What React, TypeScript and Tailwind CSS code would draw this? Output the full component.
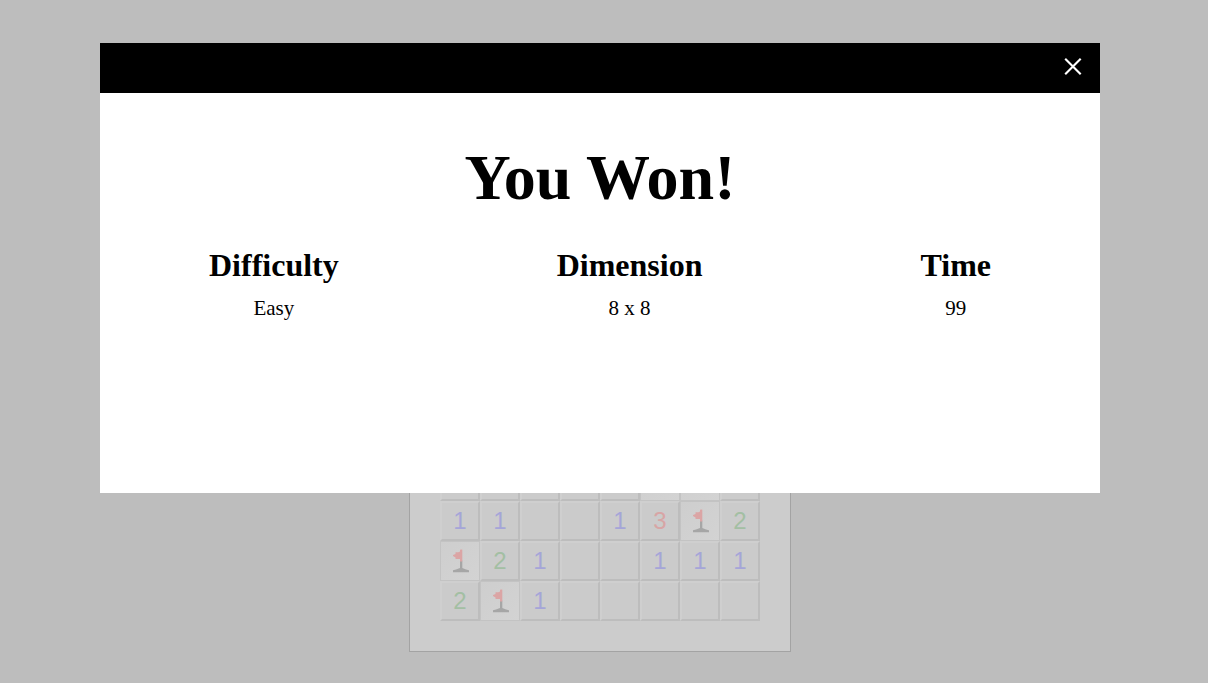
import { useState } from "react";

// ".": opened and empty, "#": covered, "F": flagged, digits: neighbouring mines
const rows = [
  "........",
  "........",
  "........",
  "........",
  ".....##.",
  "11..13F2",
  "F21..111",
  "2F1.....",
];

const digitColors: Record<string, string> = {
  "1": "text-[#a5a5d8]",
  "2": "text-[#a3bfa3]",
  "3": "text-[#d8a5a5]",
};

const stats = [
  { label: "Difficulty", value: "Easy" },
  { label: "Dimension", value: "8 x 8" },
  { label: "Time", value: "99" },
];

function Flag() {
  return (
    <svg viewBox="0 0 40 40" className="size-10 shrink-0" aria-hidden="true">
      <path d="M20 19.500H22.300V27L26 28.600L29 29.300V31.300H13V29.300L16 28.600L20 27z" fill="#a6a6a6" />
      <path d="M20 9L20.500 8.500H22.300V20.500H20V18H15.500V16.500L13 15V14L15.500 13V11.300H18.500L20 10.500z" fill="#dba5a5" />
    </svg>
  );
}

function Cell({ value }: { value: string }) {
  const covered = value === "F" || value === "#";
  return (
    <button
      type="button"
      aria-label={value === "F" ? "Flagged" : undefined}
      className={
        covered
          ? "flex size-10 items-center justify-center overflow-hidden border border-[#c3c3c3] bg-linear-to-br from-[#cecece] to-[#d3d3d3]"
          : "flex size-10 items-center justify-center border-2 border-t-[#cfcfcf] border-r-[#bdbdbd] border-b-[#bdbdbd] border-l-[#cfcfcf] bg-[#cbcbcb]"
      }
    >
      {value === "F" && <Flag />}
      {digitColors[value] && (
        <span className={`text-2xl leading-8 ${digitColors[value]}`}>{value}</span>
      )}
    </button>
  );
}

export default function App() {
  const [open, setOpen] = useState(true);
  return (
    <div className="min-h-screen bg-[#bdbdbd] text-black">
      <main className="flex min-h-screen flex-col items-center justify-end pr-2 pb-[31px] font-['Liberation_Sans',Arial,sans-serif]">
        <div className="border border-[#a3a3a3] bg-[#cccccc] p-[30px]">
          <div className="grid grid-cols-8">
            {rows.flatMap((row, y) =>
              row.split("").map((value, x) => <Cell key={`${y}-${x}`} value={value} />)
            )}
          </div>
        </div>
      </main>
      {open && (
        <div className="fixed inset-0 flex items-start justify-center pt-[43px] pr-2 font-['Liberation_Serif','Times_New_Roman',serif]">
          <section
            role="dialog"
            aria-labelledby="result"
            className="min-h-[450px] w-full max-w-[1000px] bg-white"
          >
            <header className="flex h-[50px] items-center justify-end bg-black pr-4">
              <button
                type="button"
                aria-label="Close"
                onClick={() => setOpen(false)}
                className="flex size-6 items-center justify-center text-white"
              >
                <svg viewBox="0 0 24 24" className="size-6" fill="none" stroke="currentColor" strokeWidth="2.100" aria-hidden="true">
                  <path d="M5.200 2.700l15.500 15.500M20.700 2.700L5.200 18.200" />
                </svg>
              </button>
            </header>
            <div className="pt-12">
              <h1 id="result" className="text-center text-[64px] leading-[74px] font-bold">
                You Won!
              </h1>
              <dl className="mt-8 flex justify-around text-center">
                {stats.map((stat) => (
                  <div key={stat.label}>
                    <dt className="text-[32px] leading-9 font-bold">{stat.label}</dt>
                    <dd className="mt-[13px] text-[21px] leading-6">{stat.value}</dd>
                  </div>
                ))}
              </dl>
            </div>
          </section>
        </div>
      )}
    </div>
  );
}
